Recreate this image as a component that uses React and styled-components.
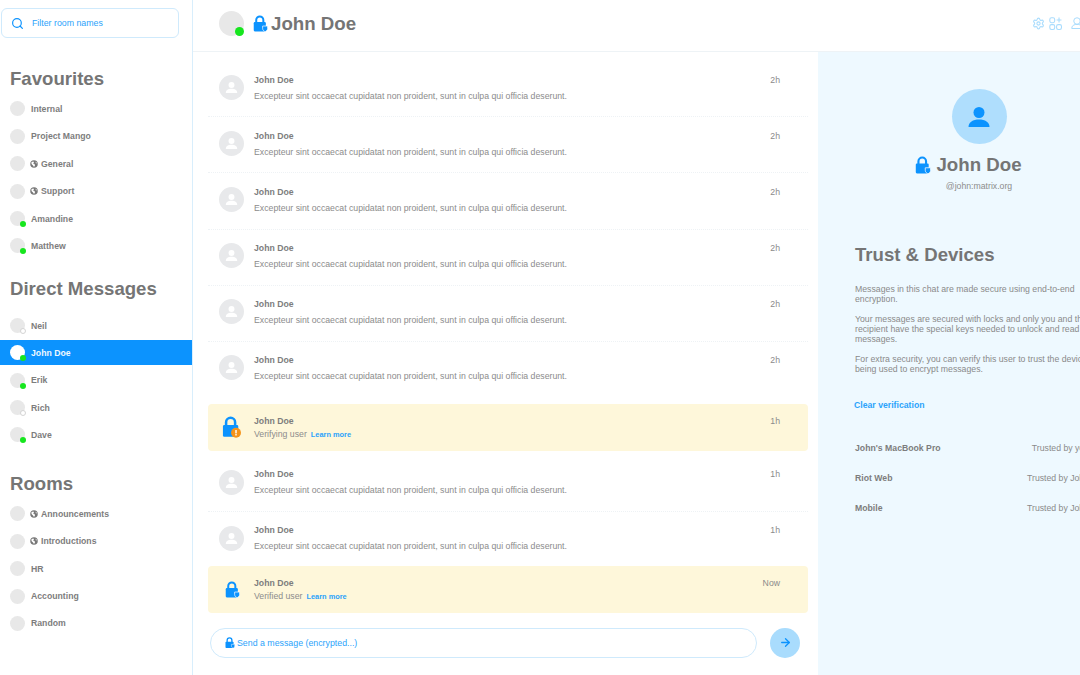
import React from "react";
import styled, { createGlobalStyle } from "styled-components";
import { Search, ArrowRight, Settings } from "lucide-react";

const Global = createGlobalStyle`
  html, body { margin: 0; padding: 0; width: 1080px; height: 675px; overflow: hidden; background: #fff; }
  body { font-family: "Liberation Sans", Arial, sans-serif; color: #777; }
  * { box-sizing: border-box; }
`;

const Page = styled.div`
  display: flex;
  width: 1140px;
  height: 675px;
`;
const Sidebar = styled.aside`
  width: 193px;
  flex-shrink: 0;
  border-right: 1px solid #d8eefc;
  padding-top: 8px;
`;
const FilterBox = styled.div`
  display: flex;
  align-items: center;
  margin-left: 1px;
  width: 178px;
  height: 30px;
  border: 1px solid #cfeafc;
  border-radius: 6px;
  padding-left: 9px;
  gap: 8px;
  color: #2ba3fb;
  font-size: 8.8px;
`;
const Heading = styled.h2`
  margin: ${p => p.$top}px 0 ${p => p.$bottom}px 10px;
  font-size: 18.6px;
  line-height: 22px;
  font-weight: 700;
  color: #757575;
`;
const RoomList = styled.div`
  display: flex;
  flex-direction: column;
`;
const Room = styled.div`
  display: flex;
  align-items: center;
  height: ${p => (p.$active ? 25 : 27.4)}px;
  margin: ${p => (p.$active ? "1px 0" : "0")};
  padding-left: 10px;
  gap: 6px;
  font-size: 8.7px;
  font-weight: 700;
  background: ${p => (p.$active ? "#0c93fe" : "transparent")};
  color: ${p => (p.$active ? "#eef8ff" : "#7d7d7d")};
`;
const RoomAvatar = styled.span`
  position: relative;
  width: 15px;
  height: 15px;
  flex-shrink: 0;
  border-radius: 50%;
  background: ${p => (p.$active ? "#fff" : "#e8e8e8")};
`;
const Presence = styled.span`
  position: absolute;
  right: -1px;
  bottom: -1px;
  width: 6px;
  height: 6px;
  border-radius: 50%;
  background: ${p => (p.$online ? "#16e61e" : "#fff")};
  border: ${p => (p.$online ? "none" : "1px solid #d4d4d4")};
`;
const RoomName = styled.span`
  display: inline-flex;
  align-items: center;
  gap: 3px;
`;
const GlobeIcon = styled.svg`
  margin-left: -1px;
  flex-shrink: 0;
`;
const Main = styled.div`
  flex: 1;
  display: flex;
  flex-direction: column;
  min-width: 0;
`;
const Header = styled.header`
  height: 52px;
  flex-shrink: 0;
  display: flex;
  align-items: center;
  padding: 0 0 5px 26px;
  border-bottom: 1px solid #eef3f6;
`;
const HeaderAvatar = styled.span`
  position: relative;
  width: 25px;
  height: 25px;
  border-radius: 50%;
  background: #e8e8e8;
  margin-right: 9px;
`;
const HeaderDot = styled.span`
  position: absolute;
  right: 0;
  bottom: 0;
  width: 9px;
  height: 9px;
  border-radius: 50%;
  background: #16e61e;
`;
const Title = styled.h1`
  display: flex;
  align-items: center;
  gap: 3px;
  margin: 1px 0 0;
  font-size: 18.7px;
  font-weight: 700;
  color: #757575;
`;
const HeaderIcons = styled.div`
  margin-left: auto;
  margin-right: 57px;
  display: flex;
  align-items: center;
  gap: 4px;
  color: #a9dcfd;
`;
const IconSlot = styled.span`
  display: flex;
  margin-left: ${p => p.$left || 0}px;
`;
const Body = styled.div`
  flex: 1;
  display: flex;
  min-height: 0;
`;
const Chat = styled.section`
  width: 625px;
  flex-shrink: 0;
  display: flex;
  flex-direction: column;
  padding: 9px 10px 0 15px;
`;
const Row = styled.div`
  display: flex;
  height: 56.2px;
  flex-shrink: 0;
  padding: 13.5px 28px 0 11px;
  border-bottom: ${p => (p.$last ? "none" : "1px dotted #eef2f5")};
`;
const MsgAvatar = styled.span`
  width: 25px;
  height: 25px;
  flex-shrink: 0;
  border-radius: 50%;
  background: #e8e9eb;
  display: flex;
  align-items: center;
  justify-content: center;
  margin-right: 10px;
`;
const MsgBody = styled.div`
  flex: 1;
  min-width: 0;
`;
const RowBody = styled(MsgBody)`
  margin-top: ${p => (p.$raised ? -1 : 0)}px;
`;
const Sender = styled.div`
  font-size: 8.7px;
  line-height: 11px;
  font-weight: 700;
  color: #7d7d7d;
`;
const MsgText = styled.div`
  margin-top: 5px;
  font-size: 8.72px;
  line-height: 11px;
  color: #8c8c8c;
`;
const Time = styled.span`
  font-size: 8.7px;
  line-height: 11px;
  color: #8a8a8a;
`;
const RowTime = styled(Time)`
  margin-top: ${p => (p.$raised ? -1 : 0)}px;
`;
const Notice = styled.div`
  display: flex;
  height: 47px;
  flex-shrink: 0;
  margin: ${p => p.$top}px 0 ${p => p.$bottom}px;
  padding: 12px 28px 0 ${p => p.$left}px;
  background: #fef7da;
  border-radius: 4px;
`;
const NoticeIcon = styled.span`
  width: ${p => p.$w}px;
  flex-shrink: 0;
  padding-top: ${p => p.$top}px;
`;
const NoticeLine = styled.div`
  display: flex;
  align-items: center;
  gap: 4px;
  margin-top: 2px;
  font-size: 8.72px;
  line-height: 11px;
  color: #8c8c8c;
`;
const Learn = styled.span`
  font-size: 7.4px;
  font-weight: 700;
  color: #2ba3fb;
`;
const Composer = styled.div`
  display: flex;
  align-items: center;
  gap: 13px;
  margin-top: 15px;
  padding-left: 2px;
`;
const InputBox = styled.div`
  display: flex;
  align-items: center;
  gap: 2px;
  width: 547px;
  height: 30px;
  border: 1px solid #cfeafc;
  border-radius: 15px;
  padding-left: 14px;
  font-size: 8.8px;
  color: #2ba3fb;
`;
const SendButton = styled.span`
  width: 30px;
  height: 30px;
  border-radius: 50%;
  background: #a9dcfd;
  display: flex;
  align-items: center;
  justify-content: center;
  color: #0c93fe;
`;
const Panel = styled.aside`
  flex: 1;
  background: #eef9ff;
  padding: 37px 37px 0;
`;
const Profile = styled.div`
  display: flex;
  flex-direction: column;
  align-items: center;
`;
const BigAvatar = styled.span`
  width: 55px;
  height: 55px;
  border-radius: 50%;
  background: #afdefd;
  display: flex;
  align-items: center;
  justify-content: center;
`;
const ProfileName = styled.h2`
  display: flex;
  align-items: center;
  gap: 5px;
  margin: 10px 0 0;
  font-size: 18.7px;
  line-height: 22px;
  font-weight: 700;
  color: #757575;
`;
const ProfileLock = styled.span`
  margin-left: -21px;
`;
const Handle = styled.div`
  margin-top: 5px;
  font-size: 8.7px;
  line-height: 11px;
  color: #8c8c8c;
`;
const PanelTitle = styled.h2`
  margin: 52px 0 0;
  font-size: 18.6px;
  line-height: 22px;
  font-weight: 700;
  color: #757575;
`;
const Para = styled.p`
  margin: 10px 0 0;
  font-size: 8.72px;
  line-height: 10px;
  color: #8a8a8a;
  &:first-of-type { margin-top: 18px; }
`;
const ClearLink = styled.div`
  margin-top: 26px;
  font-size: 8.7px;
  line-height: 11px;
  font-weight: 700;
  color: #2ba3fb;
  margin-left: -1px;
`;
const Devices = styled.div`
  margin-top: 32px;
  padding-right: 14px;
  display: flex;
  flex-direction: column;
  gap: 19px;
`;
const Device = styled.div`
  display: flex;
  justify-content: space-between;
  font-size: 8.7px;
  line-height: 11px;
`;
const DeviceName = styled.b`
  color: #7d7d7d;
`;
const DeviceTrust = styled.span`
  color: #8a8a8a;
`;

const Person = ({ size = 13, color = "#fff" }) => (
  <svg width={size} height={size} viewBox="0 0 24 24">
    <circle cx="12" cy="7.5" r="5.5" fill={color} />
    <path d="M1.5 22c0-5 4.5-7.5 10.5-7.5S22.500 17 22.500 22z" fill={color} />
  </svg>
);
const Globe = () => (
  <GlobeIcon width="8" height="8" viewBox="0 0 16 16">
    <circle cx="8" cy="8" r="7.500" fill="#777" />
    <path d="M3 4l4-1 1 2-2 2 3 1 1 3-2 3-2-3-3-3zM11 3l3 3-2 1z" fill="#fff" />
  </GlobeIcon>
);
const Lock = ({ w = 15, badge = "shield" }) => (
  <svg width={w} height={w * 1.14} viewBox="0 0 21 24" style={{ display: "block" }}>
    <path d="M4.500 11V7a5 5 0 0 1 10 0v4" fill="none" stroke="#0c93fe" strokeWidth="2.800" />
    <rect x="1" y="10" width="17" height="13" rx="1.500" fill="#0c93fe" />
    {badge === "shield" && (
      <path d="M13.500 15.500h7v3.500c0 2-1.500 3.500-3.500 4.500-2-1-3.500-2.500-3.500-4.500z" fill="#0c93fe" stroke="#fff" strokeWidth="1" />
    )}
    {badge === "warn" && (
      <>
        <circle cx="15.500" cy="18.500" r="5.500" fill="#f5931a" />
        <rect x="14.700" y="15.500" width="1.600" height="3.800" fill="#fff" />
        <rect x="14.700" y="20" width="1.600" height="1.600" fill="#fff" />
      </>
    )}
  </svg>
);
const Apps = () => (
  <svg width="13" height="13" viewBox="0 0 24 24" fill="none" stroke="#a9dcfd" strokeWidth="2">
    <rect x="1.500" y="1.500" width="9" height="9" rx="3" />
    <rect x="1.500" y="14" width="9" height="9" rx="3" />
    <rect x="14" y="14" width="9" height="9" rx="3" />
    <path d="M18.500 1v9M14 5.500h9" />
  </svg>
);
const UserOutline = () => (
  <svg width="12" height="12" viewBox="0 0 24 24" fill="none" stroke="#a9dcfd" strokeWidth="2">
    <circle cx="12" cy="8" r="6.500" />
    <path d="M1.500 23c0-5 3-7 7-8h7c4 1 7 3 7 8z" />
  </svg>
);

const RoomRow = ({ name, globe, status, active }) => (
  <Room $active={active}>
    <RoomAvatar $active={active}>
      {status && <Presence $online={status === "on"} />}
    </RoomAvatar>
    <RoomName>
      {globe && <Globe />}
      {name}
    </RoomName>
  </Room>
);

const favourites = [
  { name: "Internal" },
  { name: "Project Mango" },
  { name: "General", globe: true },
  { name: "Support", globe: true },
  { name: "Amandine", status: "on" },
  { name: "Matthew", status: "on" },
];
const direct = [
  { name: "Neil", status: "off" },
  { name: "John Doe", status: "on", active: true },
  { name: "Erik", status: "on" },
  { name: "Rich", status: "off" },
  { name: "Dave", status: "on" },
];
const rooms = [
  { name: "Announcements", globe: true },
  { name: "Introductions", globe: true },
  { name: "HR" },
  { name: "Accounting" },
  { name: "Random" },
];
const TEXT = "Excepteur sint occaecat cupidatat non proident, sunt in culpa qui officia deserunt.";

const Message = ({ time, last, raised }) => (
  <Row $last={last}>
    <MsgAvatar><Person size={13} /></MsgAvatar>
    <RowBody $raised={raised}>
      <Sender>John Doe</Sender>
      <MsgText>{TEXT}</MsgText>
    </RowBody>
    <RowTime $raised={raised}>{time}</RowTime>
  </Row>
);

export default function App() {
  return (
    <Page>
      <Global />
      <Sidebar>
        <FilterBox>
          <Search size={13} strokeWidth={2.2} color="#0c93fe" />
          Filter room names
        </FilterBox>
        <Heading $top={30} $bottom={5.3}>Favourites</Heading>
        <RoomList>{favourites.map(r => <RoomRow key={r.name} {...r} />)}</RoomList>
        <Heading $top={18.4} $bottom={12}>Direct Messages</Heading>
        <RoomList>{direct.map(r => <RoomRow key={r.name} {...r} />)}</RoomList>
        <Heading $top={24.6} $bottom={5}>Rooms</Heading>
        <RoomList>{rooms.map(r => <RoomRow key={r.name} {...r} />)}</RoomList>
      </Sidebar>
      <Main>
        <Header>
          <HeaderAvatar><HeaderDot /></HeaderAvatar>
          <Title><Lock w={15} />John Doe</Title>
          <HeaderIcons>
            <Settings size={13} strokeWidth={2} />
            <Apps />
            <IconSlot $left={5}><UserOutline /></IconSlot>
          </HeaderIcons>
        </Header>
        <Body>
          <Chat>
            {[0, 1, 2, 3, 4].map(i => <Message key={i} time="2h" />)}
            <Message time="2h" last />
            <Notice $top={6} $bottom={5} $left={14}>
              <NoticeIcon $w={32} $top={0}><Lock w={19} badge="warn" /></NoticeIcon>
              <MsgBody>
                <Sender>John Doe</Sender>
                <NoticeLine>Verifying user<Learn>Learn more</Learn></NoticeLine>
              </MsgBody>
              <Time>1h</Time>
            </Notice>
            <Message time="1h" raised />
            <Message time="1h" last raised />
            <Notice $top={-3} $bottom={0} $left={17}>
              <NoticeIcon $w={29} $top={3}><Lock w={15} /></NoticeIcon>
              <MsgBody>
                <Sender>John Doe</Sender>
                <NoticeLine>Verified user<Learn>Learn more</Learn></NoticeLine>
              </MsgBody>
              <Time>Now</Time>
            </Notice>
            <Composer>
              <InputBox><Lock w={10} />Send a message (encrypted...)</InputBox>
              <SendButton><ArrowRight size={13} strokeWidth={2.400} /></SendButton>
            </Composer>
          </Chat>
          <Panel>
            <Profile>
              <BigAvatar><Person size={24} color="#0c93fe" /></BigAvatar>
              <ProfileName><ProfileLock><Lock w={16} /></ProfileLock>John Doe</ProfileName>
              <Handle>@john:matrix.org</Handle>
            </Profile>
            <PanelTitle>Trust &amp; Devices</PanelTitle>
            <Para>Messages in this chat are made secure using end-to-end encryption.</Para>
            <Para>Your messages are secured with locks and only you and the recipient have the special keys needed to unlock and read messages.</Para>
            <Para>For extra security, you can verify this user to trust the devices being used to encrypt messages.</Para>
            <ClearLink>Clear verification</ClearLink>
            <Devices>
              <Device><DeviceName>John's MacBook Pro</DeviceName><DeviceTrust>Trusted by you</DeviceTrust></Device>
              <Device><DeviceName>Riot Web</DeviceName><DeviceTrust>Trusted by John</DeviceTrust></Device>
              <Device><DeviceName>Mobile</DeviceName><DeviceTrust>Trusted by John</DeviceTrust></Device>
            </Devices>
          </Panel>
        </Body>
      </Main>
    </Page>
  );
}
